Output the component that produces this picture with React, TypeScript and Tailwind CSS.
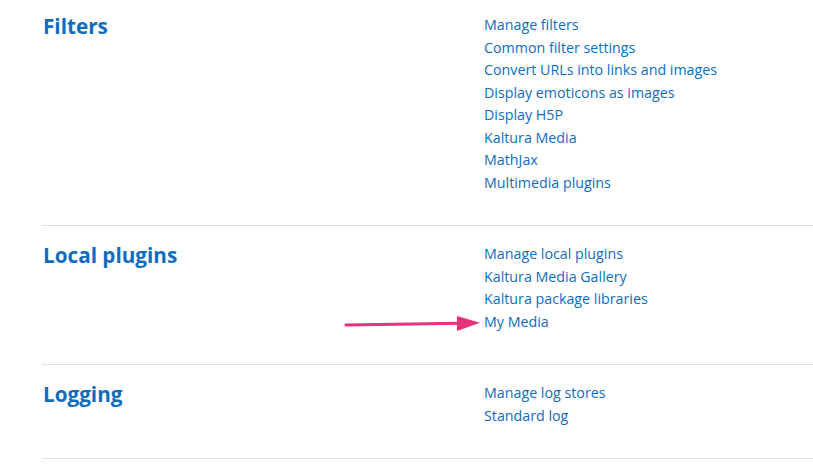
const sections = [
  {
    title: "Filters",
    links: [
      "Manage filters",
      "Common filter settings",
      "Convert URLs into links and images",
      "Display emoticons as images",
      "Display H5P",
      "Kaltura Media",
      "MathJax",
      "Multimedia plugins",
    ],
  },
  {
    title: "Local plugins",
    links: [
      "Manage local plugins",
      "Kaltura Media Gallery",
      "Kaltura package libraries",
      "My Media",
    ],
  },
  {
    title: "Logging",
    links: ["Manage log stores", "Standard log"],
  },
];

function Arrow() {
  return (
    <svg
      className="absolute left-[344px] top-[314px]"
      width="140"
      height="20"
      viewBox="0 0 140 20"
    >
      <line x1="2" y1="11" x2="116" y2="9.2" stroke="#e8317b" strokeWidth="3" strokeLinecap="round" />
      <polygon points="113,2 136,8.8 113,17" fill="#e8317b" />
    </svg>
  );
}

export default function App() {
  return (
    <div
      className="relative w-[813px] h-[468px] overflow-hidden bg-white"
      style={{ fontFamily: '"Open Sans", "Noto Sans", sans-serif' }}
    >
      <div className="ml-[42px]">
        {sections.map((s, i) => (
          <div
            key={s.title}
            className={`flex ${i === 0 ? "pt-[14px]" : "pt-[17px] border-t border-[#dee2e6]"} pb-[31px]`}
          >
            <div className="w-[442px] shrink-0 pl-[1px]">
              <h3 className="text-[20.7px] leading-[27px] font-bold text-[#0f6cbf] -mt-[1px]">
                {s.title}
              </h3>
            </div>
            <ul className="flex flex-col text-[14.25px] leading-[22.5px]">
              {s.links.map((l) => (
                <li key={l}>
                  <a href="#" className="text-[#0f6cbf]">
                    {l}
                  </a>
                </li>
              ))}
            </ul>
          </div>
        ))}
        <div className="border-t border-[#dee2e6]" />
      </div>
      <Arrow />
    </div>
  );
}
